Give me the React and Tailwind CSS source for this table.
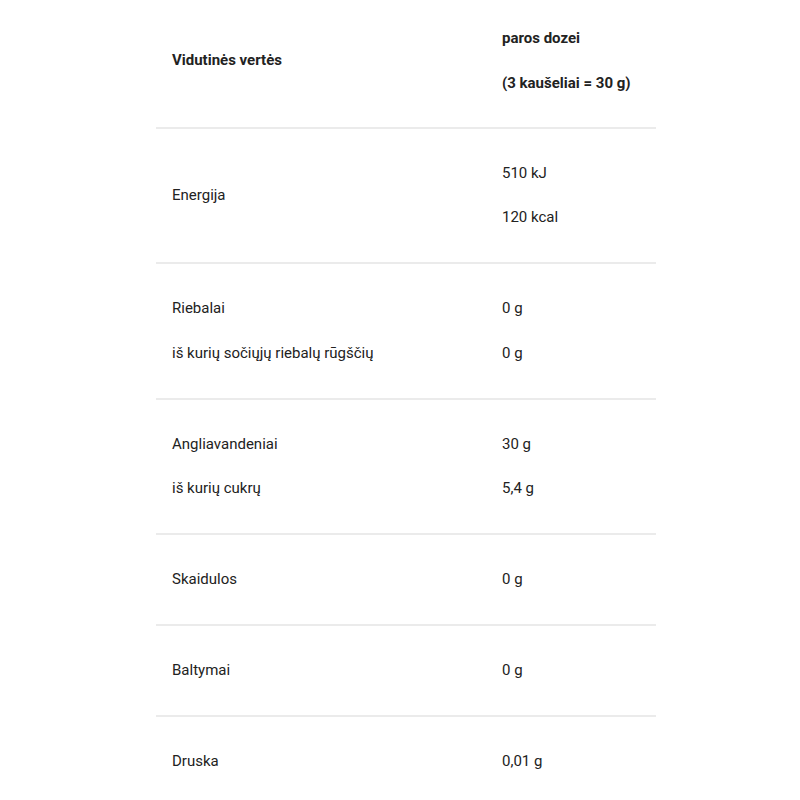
import React from 'react'

const rows = [
  { left: ['Energija'], right: ['510 kJ', '120 kcal'] },
  { left: ['Riebalai', 'iš kurių sočiųjų riebalų rūgščių'], right: ['0 g', '0 g'] },
  { left: ['Angliavandeniai', 'iš kurių cukrų'], right: ['30 g', '5,4 g'] },
  { left: ['Skaidulos'], right: ['0 g'] },
  { left: ['Baltymai'], right: ['0 g'] },
  { left: ['Druska'], right: ['0,01 g'], last: true },
]

const Cell = ({ lines, bold }) => (
  <div className={`flex flex-col justify-center gap-[24.5px] px-4 ${bold ? 'font-bold' : ''}`}>
    {lines.map((t, i) => (
      <p key={i} className="leading-[20px]">{t}</p>
    ))}
  </div>
)

const App = () => {
  return (
    <div
      className="w-[800px] h-[800px] bg-white overflow-hidden text-[15px] text-[#222]"
      style={{ fontFamily: 'Roboto, "Liberation Sans", sans-serif' }}
    >
      <div className="ml-[156px] w-[500px]">
        {/* header */}
        <div className="grid grid-cols-[330px_1fr] pt-[28px] pb-[34px] border-b-2 border-[#ebebeb]">
          <Cell lines={['Vidutinės vertės']} bold />
          <Cell lines={['paros dozei', '(3 kaušeliai = 30 g)']} bold />
        </div>

        {rows.map((r, i) => (
          <div
            key={i}
            className={`grid grid-cols-[330px_1fr] pt-[34px] pb-[35px] ${r.last ? '' : 'border-b-2 border-[#ebebeb]'}`}
          >
            <Cell lines={r.left} />
            <Cell lines={r.right} />
          </div>
        ))}
      </div>
    </div>
  )
}

export default App
